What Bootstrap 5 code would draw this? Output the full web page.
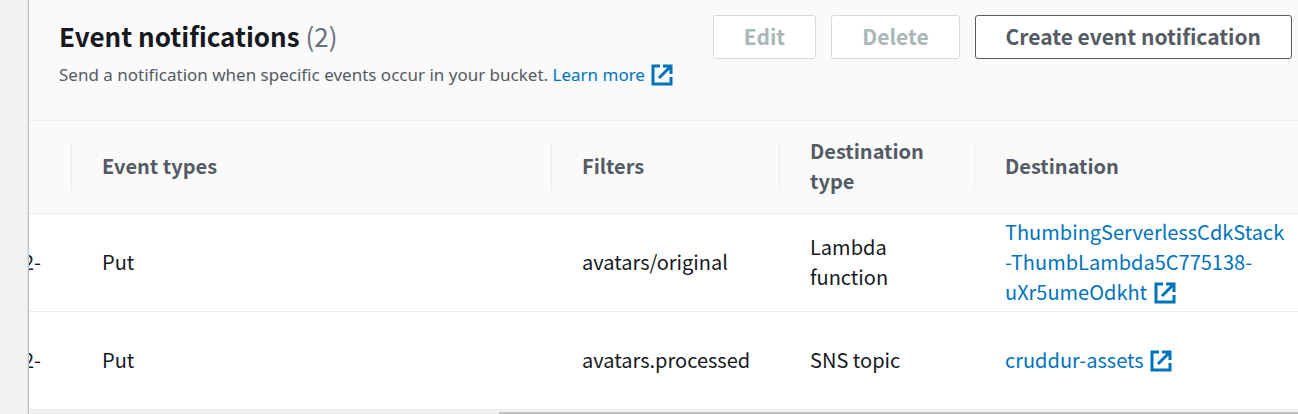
<!DOCTYPE html>
<html lang="en">
<head>
<meta charset="utf-8">
<meta name="viewport" content="width=device-width, initial-scale=1">
<title>Event notifications</title>
<link href="https://cdn.jsdelivr.net/npm/bootstrap@5.3.0/dist/css/bootstrap.min.css" rel="stylesheet">
<style>
  body { font-family: "Noto Sans CJK JP", "Noto Sans", sans-serif; font-size: 20px; line-height: 30px; color: #16191f; background: #f1f3f3; }
  a { color: #0073bb; text-decoration: none; }
  a:hover { text-decoration: underline; }
  .panel { margin-left: 28px; border-left: 1px solid #bcc2c5; background: #fff; box-shadow: -1px 0 1px #dfe3e4; }
  .panel-head { background: #fafafa; padding: 15px 6px 30px 30px; min-height: 120px; }
  .panel-title { font-size: 26px; line-height: 42px; font-weight: 700; margin: 0 0 3px; }
  .panel-count { font-weight: 400; color: #687078; }
  .panel-text { font-family: "Noto Sans", sans-serif; font-size: 17px; line-height: 30px; color: #545b64; margin: 0; }
  .actions { gap: 15px; }
  .action { --bs-btn-font-size: 21px; --bs-btn-line-height: 30px; --bs-btn-font-weight: 700;
    --bs-btn-padding-x: 30px; --bs-btn-border-radius: 3px;
    --bs-btn-color: #545b64; --bs-btn-bg: #fff; --bs-btn-border-color: #545b64;
    --bs-btn-hover-color: #16191f; --bs-btn-hover-bg: #fafafa; --bs-btn-hover-border-color: #16191f;
    --bs-btn-disabled-color: #aab7b8; --bs-btn-disabled-bg: #fff; --bs-btn-disabled-border-color: #d5dbdb; --bs-btn-disabled-opacity: 1;
    padding-top: 5px; padding-bottom: 7px; }
  .events { table-layout: fixed; width: 100%; }
  .events th { height: 93px; padding: 0; background: #fafafa; color: #545b64; font-weight: 700; border-top: 1px solid #eaeded; border-bottom: 1px solid #eaeded; }
  .events th > div { height: 46px; padding: 0 0 2px 30px; border-right: 1px solid #eaeded; }
  .events th:last-child > div { border-right: 0; }
  .events th span { flex: 0 1 150px; }
  .events td { height: 98px; padding: 2px 8px 4px 30px; border-bottom: 1px solid #eaeded; }
  .events td:first-child { padding: 2px 31px 4px 0; }
  .col-name { width: 43px; }
  .col-filter { width: 228px; }
  .col-type { width: 195px; }
  .col-dest { width: 323px; }
  .ext { width: 22px; height: 22px; margin-left: 2px; fill: none; stroke: currentColor; stroke-width: 3; vertical-align: -4px; }
  .panel-text .ext { vertical-align: -5px; }
  .scroll-track { height: 5px; padding-top: 2px; background: #f1f1f1; }
  .scroll-thumb { height: 3px; width: 63%; background: #c1c1c1; }
</style>
</head>
<body>
<svg class="d-none" aria-hidden="true">
  <symbol id="external" viewBox="0 0 22 22">
    <path d="M9 2H2v18h18v-7M12 2h8v8M20 2L8 14"/>
  </symbol>
</svg>
<main class="panel overflow-hidden">
  <header class="panel-head d-flex justify-content-between align-items-start">
    <div>
      <h2 class="panel-title">Event notifications <span class="panel-count">(2)</span></h2>
      <p class="panel-text">Send a notification when specific events occur in your bucket. <a href="#">Learn more <svg class="ext" role="img" aria-label="Opens in a new tab"><use href="#external"/></svg></a></p>
    </div>
    <div class="actions d-flex flex-shrink-0">
      <button type="button" class="btn action" disabled>Edit</button>
      <button type="button" class="btn action" disabled>Delete</button>
      <button type="button" class="btn action">Create event notification</button>
    </div>
  </header>
  <table class="events align-middle">
    <colgroup><col class="col-name"><col><col class="col-filter"><col class="col-type"><col class="col-dest"></colgroup>
    <thead>
      <tr>
        <th scope="col"><div></div></th>
        <th scope="col"><div class="d-flex align-items-center"><span>Event types</span></div></th>
        <th scope="col"><div class="d-flex align-items-center"><span>Filters</span></div></th>
        <th scope="col"><div class="d-flex align-items-center"><span>Destination type</span></div></th>
        <th scope="col"><div class="d-flex align-items-center"><span>Destination</span></div></th>
      </tr>
    </thead>
    <tbody>
      <tr>
        <td><div class="d-flex justify-content-end overflow-hidden">2-</div></td>
        <td>Put</td>
        <td>avatars/original</td>
        <td>Lambda<br>function</td>
        <td><a href="#">ThumbingServerlessCdkStack<br>-ThumbLambda5C775138-<br>uXr5umeOdkht <svg class="ext" role="img" aria-label="Opens in a new tab"><use href="#external"/></svg></a></td>
      </tr>
      <tr>
        <td><div class="d-flex justify-content-end overflow-hidden">2-</div></td>
        <td>Put</td>
        <td>avatars.processed</td>
        <td>SNS topic</td>
        <td><a href="#">cruddur-assets <svg class="ext" role="img" aria-label="Opens in a new tab"><use href="#external"/></svg></a></td>
      </tr>
    </tbody>
  </table>
  <div class="scroll-track"><div class="scroll-thumb ms-auto"></div></div>
</main>
<script src="https://cdn.jsdelivr.net/npm/bootstrap@5.3.0/dist/js/bootstrap.bundle.min.js"></script>
</body>
</html>
